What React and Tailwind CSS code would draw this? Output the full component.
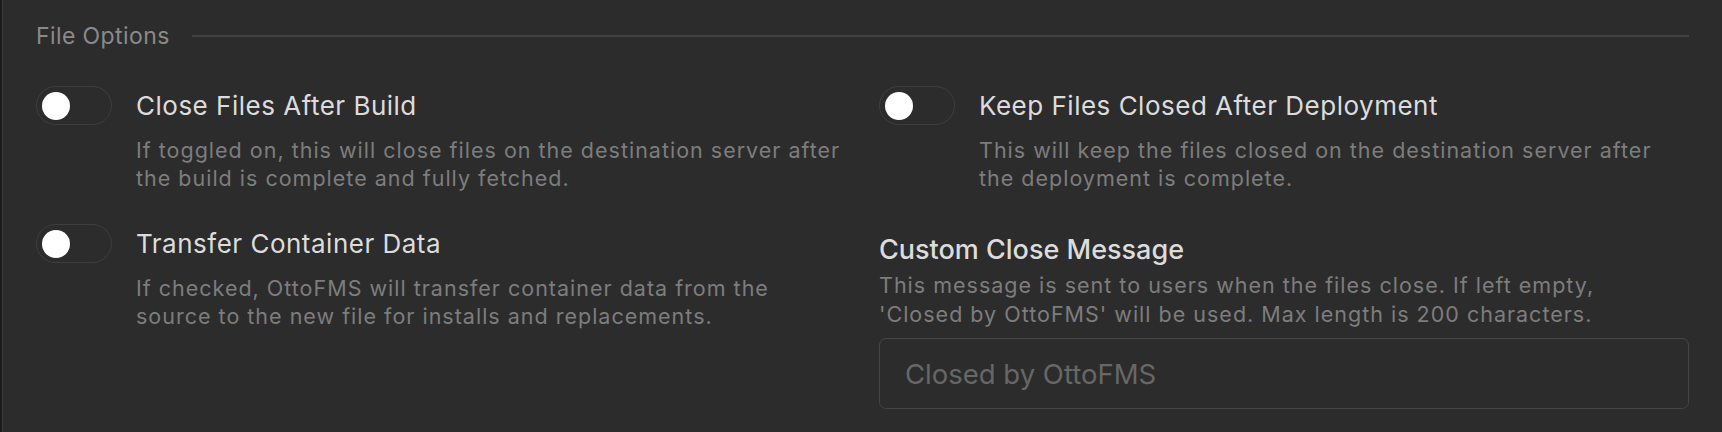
import React, { useState } from 'react';

const Toggle = ({ on, onChange }) => (
  <button
    type="button"
    onClick={() => onChange(!on)}
    className={`shrink-0 w-[76px] h-[39px] rounded-full border-[1.5px] border-[#3e3e3e] flex items-center px-[5px] ${on ? 'justify-end bg-[#3b82f6]' : 'justify-start bg-transparent'}`}
  >
    <span className="block w-[28px] h-[28px] rounded-full bg-white" />
  </button>
);

const ToggleOption = ({ title, description, className = '' }) => {
  const [on, setOn] = useState(false);
  return (
    <div className={`flex items-start gap-[24px] ${className}`}>
      <Toggle on={on} onChange={setOn} />
      <div>
        <div className="text-[26px] leading-[39px] tracking-[0.5px] text-[#dcdcdc]">{title}</div>
        <p className="mt-[11px] text-[21.5px] leading-[28px] tracking-[1px] text-[#7d7d7d]">{description}</p>
      </div>
    </div>
  );
};

export default function App() {
  return (
    <div className="h-[432px] w-full bg-[#2c2c2c] border-l-2 border-[#1b1b1b] font-['Inter',sans-serif]">
      <div className="h-full border-l border-[#3a3a3a] px-[33px] pt-[22px]">
        {/* section heading */}
        <div className="flex items-center gap-[22px]">
          <span className="text-[23px] leading-[28px] tracking-[0.4px] text-[#8a8a8a]">File Options</span>
          <div className="flex-1 h-[2px] bg-[#424242]" />
        </div>

        <div className="mt-[36px] grid grid-cols-2 gap-x-[33px]">
          <div>
            <ToggleOption
              title="Close Files After Build"
              description="If toggled on, this will close files on the destination server after the build is complete and fully fetched."
            />
            <ToggleOption
              className="mt-[32px]"
              title="Transfer Container Data"
              description="If checked, OttoFMS will transfer container data from the source to the new file for installs and replacements."
            />
          </div>

          <div>
            <ToggleOption
              title="Keep Files Closed After Deployment"
              description="This will keep the files closed on the destination server after the deployment is complete."
            />
            <div className="mt-[42px]">
              <div className="text-[27px] leading-[32px] font-medium text-[#dcdcdc]">Custom Close Message</div>
              <p className="mt-[5px] max-w-[780px] text-[21.5px] leading-[29px] tracking-[1px] text-[#7d7d7d]">
                This message is sent to users when the files close. If left empty, 'Closed by OttoFMS' will be used. Max length is 200 characters.
              </p>
              <input
                type="text"
                placeholder="Closed by OttoFMS"
                className="mt-[9px] w-full h-[71px] rounded-[7px] border border-[#454545] bg-transparent px-[25px] text-[27.5px] text-[#dcdcdc] placeholder:text-[#676767] outline-none"
              />
            </div>
          </div>
        </div>
      </div>
    </div>
  );
}
